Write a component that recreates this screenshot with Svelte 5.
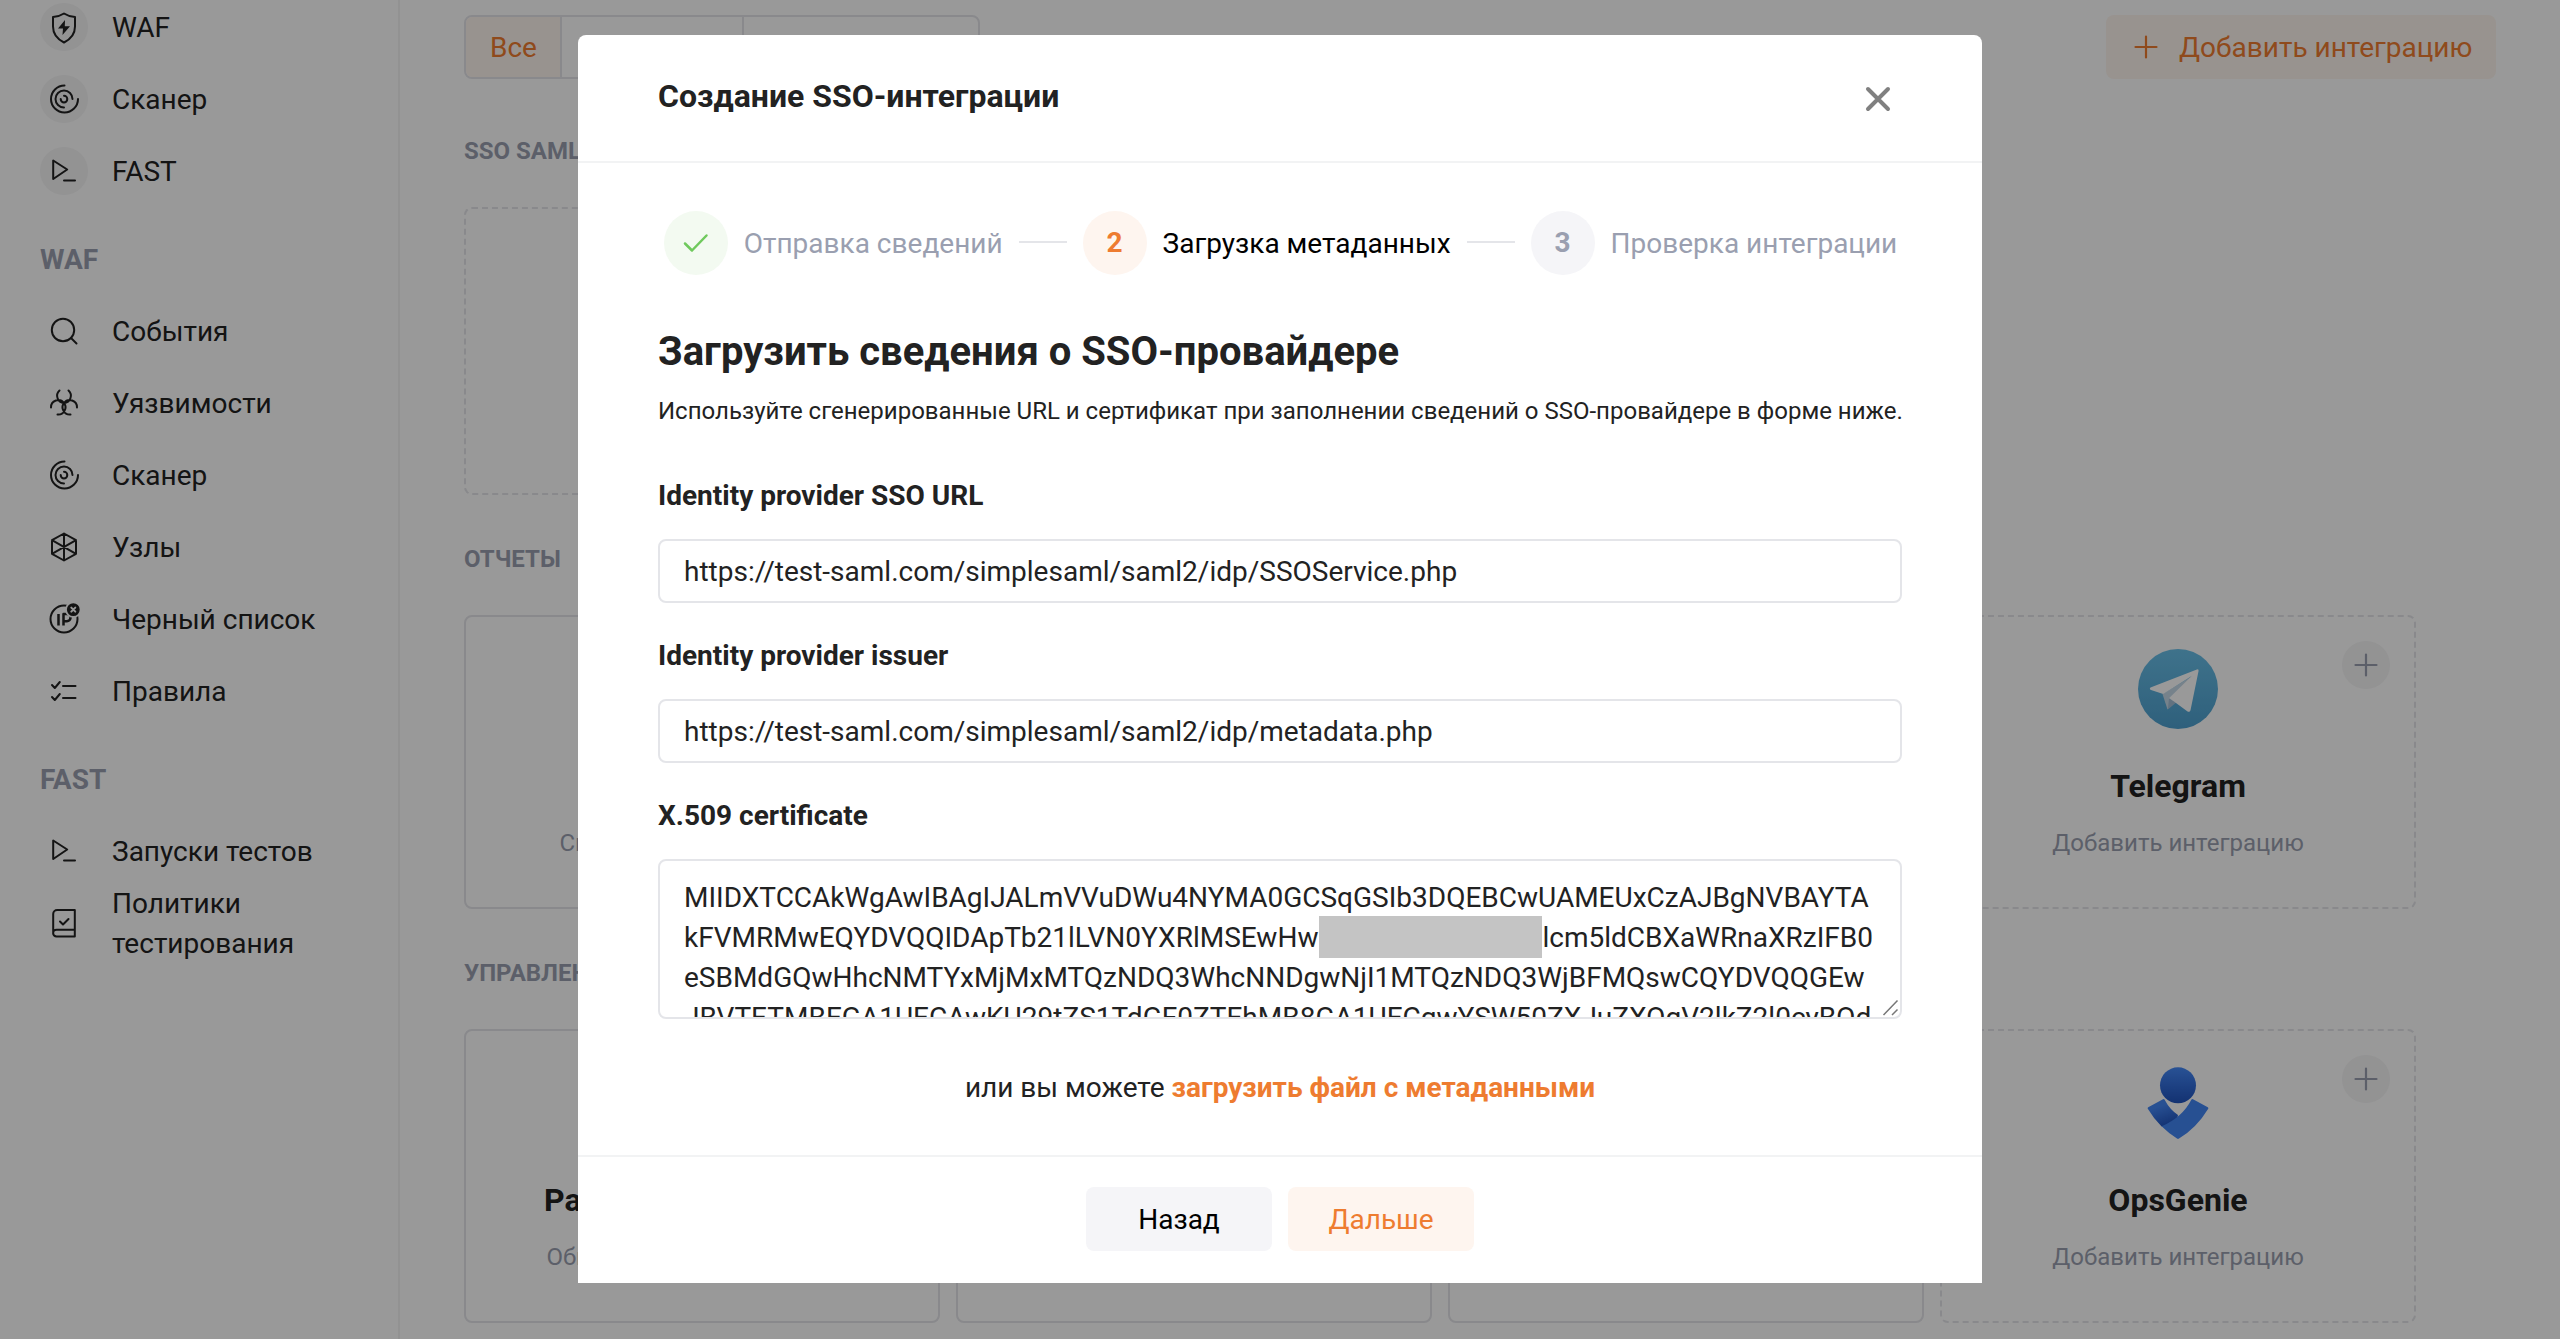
<script>
  const top = [
    { icon: 'shield', label: 'WAF' },
    { icon: 'radar', label: 'Сканер' },
    { icon: 'prompt', label: 'FAST' },
  ];
  const waf = [
    { icon: 'search', label: 'События' },
    { icon: 'hazard', label: 'Уязвимости' },
    { icon: 'radar', label: 'Сканер' },
    { icon: 'cube', label: 'Узлы' },
    { icon: 'ip', label: 'Черный список' },
    { icon: 'rules', label: 'Правила' },
  ];
  const fast = [
    { icon: 'prompt', label: 'Запуски тестов' },
    { icon: 'book', label: 'Политики тестирования' },
  ];
</script>

{#snippet icon(name)}
  <svg class="icon" viewBox="0 0 48 48">
    {#if name === 'shield'}
      <path d="M24 10.500c3.500 2.300 7 3.200 11 3.600v9.400c0 7-4 12.500-11 16-7-3.500-11-9-11-16v-9.400c4-.4 7.500-1.300 11-3.600z" />
      <path class="solid" d="M25 17l-7 8.500h5l-.5 6.500 7.500-8.800h-5.200z" />
    {:else if name === 'radar'}
      <path d="M24.500 10.500a13.500 13.500 0 1 0 13.500 13.500" />
      <path d="M32.500 24a8.500 8.500 0 1 0-8.500 8.500" />
      <path d="M24 20.800a3.300 3.300 0 1 1-3.300 3.300" />
    {:else if name === 'prompt'}
      <path d="M13.200 13.500v18.500l14-9.500zM24 33.500h11" />
    {:else if name === 'search'}
      <circle cx="23" cy="23" r="11.200" />
      <path d="M31 31l5.500 5.500" />
    {:else if name === 'hazard'}
      <path d="M19.500 11.500a7.200 7.200 0 0 0 4.500 12.500 7.200 7.200 0 0 0 4.500-12.500M11 28.500a7.200 7.200 0 0 1 13-4.500 7.200 7.200 0 0 1-6.500 11.500M37 28.500a7.200 7.200 0 0 0-13-4.500 7.200 7.200 0 0 0 6.500 11.500" />
    {:else if name === 'cube'}
      <path d="M24 10.500l12 6.700v13.600l-12 6.700-12-6.700v-13.600zM24 10.500v27M12 17.200l24 13.600M36 17.200l-24 13.600" />
    {:else if name === 'ip'}
      <circle cx="24" cy="24" r="13.500" />
      <path class="heavy" d="M18.500 19v11.500M23.500 30.500v-11.500h3.500a3.500 3.500 0 0 1 0 7.200h-3.500" />
      <circle class="knock" cx="33.300" cy="14.600" r="7.300" />
      <path class="cut" d="M31.300 12.600l4 4M35.300 12.600l-4 4" />
    {:else if name === 'rules'}
      <path d="M12 18l2.800 3 5-6M23 19h12.500M12 30l2.800 3 5-6M23 31h12.500" />
    {:else if name === 'book'}
      <path d="M13.200 34.500v-19.500a4 4 0 0 1 4-4h17.600v26.500h-18.300a3.300 3.300 0 0 1 0-6.800h18.300M20 22.500l3 3 5.500-5.500" />
    {/if}
  </svg>
{/snippet}

{#snippet item(it, round)}
  <li class="item">
    <span class="badge" class:round>{@render icon(it.icon)}</span>
    <span class="label">{it.label}</span>
  </li>
{/snippet}

{#snippet plus()}
  <svg class="plus" viewBox="0 0 24 24"><path d="M12 1.500v21M1.500 12h21" /></svg>
{/snippet}

<div class="page">
  <nav class="sidebar">
    <ul>{#each top as it}{@render item(it, true)}{/each}</ul>
    <h4>WAF</h4>
    <ul>{#each waf as it}{@render item(it, false)}{/each}</ul>
    <h4>FAST</h4>
    <ul>{#each fast as it}{@render item(it, false)}{/each}</ul>
  </nav>

  <main>
    <div class="toolbar">
      <div class="tabs">
        <span class="tab active">Все</span><span class="tab second"></span><span class="tab third"></span>
      </div>
      <button class="add">{@render plus()}<span>Добавить интеграцию</span></button>
    </div>

    <h3>SSO SAML</h3>
    <div class="cards sso"><div class="card dashed"></div></div>

    <h3>ОТЧЕТЫ</h3>
    <div class="cards">
      <div class="card">
        <div class="logo"></div>
        <div class="name"></div>
        <p class="note start email">Список адресов</p>
      </div>
      <div class="card"></div>
      <div class="card"></div>
      <div class="card dashed">
        <span class="more">{@render plus()}</span>
        <svg class="logo" viewBox="0 0 80 80">
          <defs>
            <linearGradient id="tg" x1="0" y1="0" x2="0" y2="1">
              <stop offset="0" stop-color="#69bfe8" /><stop offset="1" stop-color="#4ea0cf" />
            </linearGradient>
          </defs>
          <circle cx="40" cy="40" r="40" fill="url(#tg)" />
          <path fill="#c5d9e8" d="M24.500 45l5 15.500 24-33z" />
          <path fill="#a4bfd6" d="M31 49.500l-1.200 11 8.500-7z" />
          <path fill="#fff" d="M12.500 38.500l47-18.300q1.500 0 1 2l-8 39q-.8 2.500-3.300 1l-18-13.200 22.500-22-28.500 18-12.200-4q-2-1-.5-2.500z" />
        </svg>
        <div class="name">Telegram</div>
        <p class="note">Добавить интеграцию</p>
      </div>
    </div>

    <h3>УПРАВЛЕНИЕ</h3>
    <div class="cards">
      <div class="card">
        <div class="logo"></div>
        <div class="name start pager">Разработка</div>
        <p class="note start account">Обновить</p>
      </div>
      <div class="card"></div>
      <div class="card"></div>
      <div class="card dashed">
        <span class="more">{@render plus()}</span>
        <svg class="logo" viewBox="0 0 80 80">
          <defs>
            <linearGradient id="og1" x1="0" y1="0" x2="0" y2="1">
              <stop offset="0" stop-color="#4488f8" /><stop offset="1" stop-color="#2053bd" />
            </linearGradient>
            <linearGradient id="og2" x1=".2" y1="0" x2=".6" y2="1">
              <stop offset=".3" stop-color="#4285f4" /><stop offset="1" stop-color="#2053bd" />
            </linearGradient>
          </defs>
          <path fill="url(#og2)" d="M10.200 44.200L25 36.200q1.200-.4 1.800.8 5 9.500 13.200 15l-2 9-14.400 2.500q-8-8-13.800-17.800-.6-1 .4-1.500z" />
          <path fill="#4285f4" d="M69.800 44.200L55 36.200q-1.200-.4-1.800.8-9 17.500-29.600 26.300 7 7 15.400 12.300 1 .6 2 0 18-11.200 29.200-29.900.6-1-.4-1.500z" />
          <circle cx="40" cy="22.300" r="18" fill="url(#og1)" />
        </svg>
        <div class="name">OpsGenie</div>
        <p class="note">Добавить интеграцию</p>
      </div>
    </div>
  </main>

  <div class="overlay">
    <section class="modal">
      <header>
        <h1>Создание SSO-интеграции</h1>
        <svg class="close" viewBox="0 0 28 28"><path d="M4 4l20 20M24 4l-20 20" /></svg>
      </header>
      <div class="body">
        <div class="steps">
          <span class="dot done"><svg viewBox="0 0 28 28"><path d="M3 14.500l7 7 14.500-15" /></svg></span>
          <span class="step">Отправка сведений</span>
          <i></i>
          <span class="dot now">2</span>
          <span class="step current">Загрузка метаданных</span>
          <i></i>
          <span class="dot">3</span>
          <span class="step">Проверка интеграции</span>
        </div>
        <h2>Загрузить сведения о SSO-провайдере</h2>
        <p class="lead">Используйте сгенерированные URL и сертификат при заполнении сведений о SSO-провайдере в форме ниже.</p>
        <div class="field">
          <b>Identity provider SSO URL</b>
          <div class="box">https://test-saml.com/simplesaml/saml2/idp/SSOService.php</div>
        </div>
        <div class="field">
          <b>Identity provider issuer</b>
          <div class="box">https://test-saml.com/simplesaml/saml2/idp/metadata.php</div>
        </div>
        <div class="field">
          <b>X.509 certificate</b>
          <div class="box area">
            <div>MIIDXTCCAkWgAwIBAgIJALmVVuDWu4NYMA0GCSqGSIb3DQEBCwUAMEUxCzAJBgNVBAYTA</div>
            <div class="masked"><span>kFVMRMwEQYDVQQIDApTb21lLVN0YXRlMSEwHw</span><i class="mask"></i><span>lcm5ldCBXaWRnaXRzIFB0</span></div>
            <div>eSBMdGQwHhcNMTYxMjMxMTQzNDQ3WhcNNDgwNjI1MTQzNDQ3WjBFMQswCQYDVQQGEw</div>
            <div>JBVTETMBEGA1UECAwKU29tZS1TdGF0ZTEhMB8GA1UECgwYSW50ZXJuZXQgV2lkZ2l0cyBQd</div>
            <svg class="grip" viewBox="0 0 18 18"><path d="M1.500 16L15.500 1.500M10 16l5.500-5.500" /></svg>
          </div>
        </div>
        <p class="upload">или вы можете <a href="#upload">загрузить файл с метаданными</a></p>
      </div>
      <footer>
        <button>Назад</button>
        <button class="next">Дальше</button>
      </footer>
    </section>
  </div>
</div>

<style>
  :global(body) { margin: 0; overflow: hidden; }
  .page { position: relative; display: flex; width: 2560px; height: 1339px; overflow: hidden; background: #fff; color: #222; font: 28px/40px Roboto, sans-serif; }
  h1, h2, h3, h4, p, ul { margin: 0; padding: 0; }
  button { border: 0; font: inherit; padding: 0; }
  .sidebar { box-sizing: border-box; width: 400px; flex: none; border-right: 2px solid #f4f4f4; margin-top: -9px; padding-left: 40px; }
  .item { display: flex; align-items: center; gap: 24px; height: 72px; list-style: none; }
  .badge { width: 48px; height: 48px; flex: none; border-radius: 50%; }
  .round { background: #f5f5f6; }
  .icon { display: block; width: 48px; height: 48px; fill: none; stroke: #222; stroke-width: 2; stroke-linecap: round; stroke-linejoin: round; }
  .icon .solid { fill: #222; stroke: none; }
  .icon .heavy { stroke-width: 2.500; stroke-linecap: butt; }
  .icon .knock { fill: #222; stroke: #fff; stroke-width: 1.800; }
  .icon .cut { stroke: #fff; }
  .label { width: 220px; padding-top: 2px; }
  h4 { box-sizing: border-box; height: 88px; padding-top: 33px; font-size: 28px; font-weight: 700; color: #9a9fb0; }

  main { flex: 1; padding: 15px 64px 0; }
  .toolbar { display: flex; justify-content: space-between; height: 64px; margin-bottom: 12px; }
  .tabs { display: flex; box-sizing: border-box; width: 516px; border: 2px solid #e4e5e9; border-radius: 8px; overflow: hidden; }
  .tab { box-sizing: border-box; line-height: 62px; }
  .active { width: 96px; padding-left: 24px; background: #fef5ef; color: #ee7c30; border-right: 2px solid #e4e5e9; }
  .second { width: 182px; border-right: 2px solid #e4e5e9; }
  .add { display: flex; align-items: center; box-sizing: border-box; width: 390px; gap: 21px; padding-left: 28px; background: #fef5ef; color: #ee7c30; border-radius: 8px; }
  .add span { padding-top: 2px; }
  .plus { width: 24px; height: 24px; fill: none; stroke: currentColor; stroke-width: 2.200; stroke-linecap: round; }
  h3 { height: 96px; margin-top: 24px; line-height: 81px; font-size: 24px; font-weight: 700; color: #9a9fb0; }
  .toolbar + h3 { margin-top: 0; line-height: 120px; height: 116px; }
  .cards { display: grid; grid-template-columns: repeat(4, 476px); gap: 16px; height: 294px; }
  .cards.sso { height: 288px; }
  .card { position: relative; display: flex; flex-direction: column; align-items: center; box-sizing: border-box; padding-top: 32px; border: 2px solid #e4e5e9; border-radius: 8px; }
  .card.dashed { border-style: dashed; }
  .logo { display: block; width: 80px; height: 80px; }
  .name { height: 40px; margin-top: 37px; font-size: 32px; font-weight: 700; color: #222; }
  .note { height: 32px; margin-top: 21px; font-size: 24px; line-height: 32px; color: #9a9fb0; }
  .start { white-space: nowrap; }
  .email { width: 285px; }
  .pager { width: 316px; }
  .account { width: 311px; }
  .more { position: absolute; top: 24px; right: 24px; display: grid; place-items: center; width: 48px; height: 48px; border-radius: 50%; background: #f5f5f6; color: #9a9fb0; }

  .overlay { position: absolute; inset: 0; display: flex; justify-content: center; align-items: flex-start; padding-top: 35px; background: rgba(0, 0, 0, 0.4); }
  .modal { width: 1404px; height: 1248px; display: flex; flex-direction: column; background: #fff; border-radius: 8px 8px 0 0; }
  header { display: flex; align-items: center; justify-content: space-between; height: 126px; padding: 0 90px 0 80px; border-bottom: 2px solid #f2f3f4; }
  h1 { font-size: 32px; font-weight: 700; padding-bottom: 4px; }
  .close { width: 28px; height: 28px; padding-top: 2px; fill: none; stroke: #808080; stroke-width: 4; stroke-linecap: round; }
  .body { flex: 1; padding: 48px 80px 0; }
  .steps { display: flex; align-items: center; justify-content: center; gap: 16px; height: 64px; padding-left: 1px; color: #9a9fb0; }
  .steps i { width: 48px; height: 2px; margin-bottom: 2px; background: #e4e5e9; }
  .step { padding-top: 2px; }
  .dot { display: grid; place-items: center; width: 64px; height: 64px; flex: none; border-radius: 50%; background: #f5f5f8; font-weight: 700; line-height: 42px; }
  .dot.done { background: #f3faf1; }
  .done svg { width: 28px; height: 28px; fill: none; stroke: #6fc95d; stroke-width: 2.500; stroke-linecap: round; stroke-linejoin: round; }
  .dot.now { background: #fef5ef; color: #ee7c30; }
  .steps .current { color: #000; }
  h2 { margin-top: 49px; height: 55px; line-height: 56px; font-size: 40px; font-weight: 700; }
  .lead { margin-top: 16px; height: 32px; line-height: 32px; font-size: 24px; white-space: nowrap; }
  .field { margin-top: 48px; }
  .field + .field { margin-top: 32px; }
  .field b { display: block; height: 40px; line-height: 42px; font-weight: 700; margin-bottom: 24px; }
  .box { box-sizing: border-box; height: 64px; padding: 11px 24px 0; border: 2px solid #e4e5e9; border-radius: 8px; white-space: nowrap; overflow: hidden; }
  .area { position: relative; height: 160px; padding-top: 17px; }
  .masked { display: flex; height: 40px; }
  .mask { width: 223px; height: 42px; margin: -2px 0 0 1px; background: #c4c4c4; }
  .grip { position: absolute; right: 0; bottom: 0; width: 18px; height: 18px; fill: none; stroke: #777; stroke-width: 1.500; }
  .upload { margin-top: 49px; text-align: center; }
  a { color: #ee7c30; font-weight: 700; text-decoration: none; }
  footer { display: flex; justify-content: center; align-items: center; gap: 16px; height: 126px; border-top: 2px solid #f2f3f4; }
  footer button { box-sizing: border-box; width: 186px; height: 64px; margin-bottom: 2px; padding-top: 2px; border-radius: 8px; background: #f5f5f8; color: #000; }
  footer .next { background: #fef5ef; color: #ee7c30; }
</style>
